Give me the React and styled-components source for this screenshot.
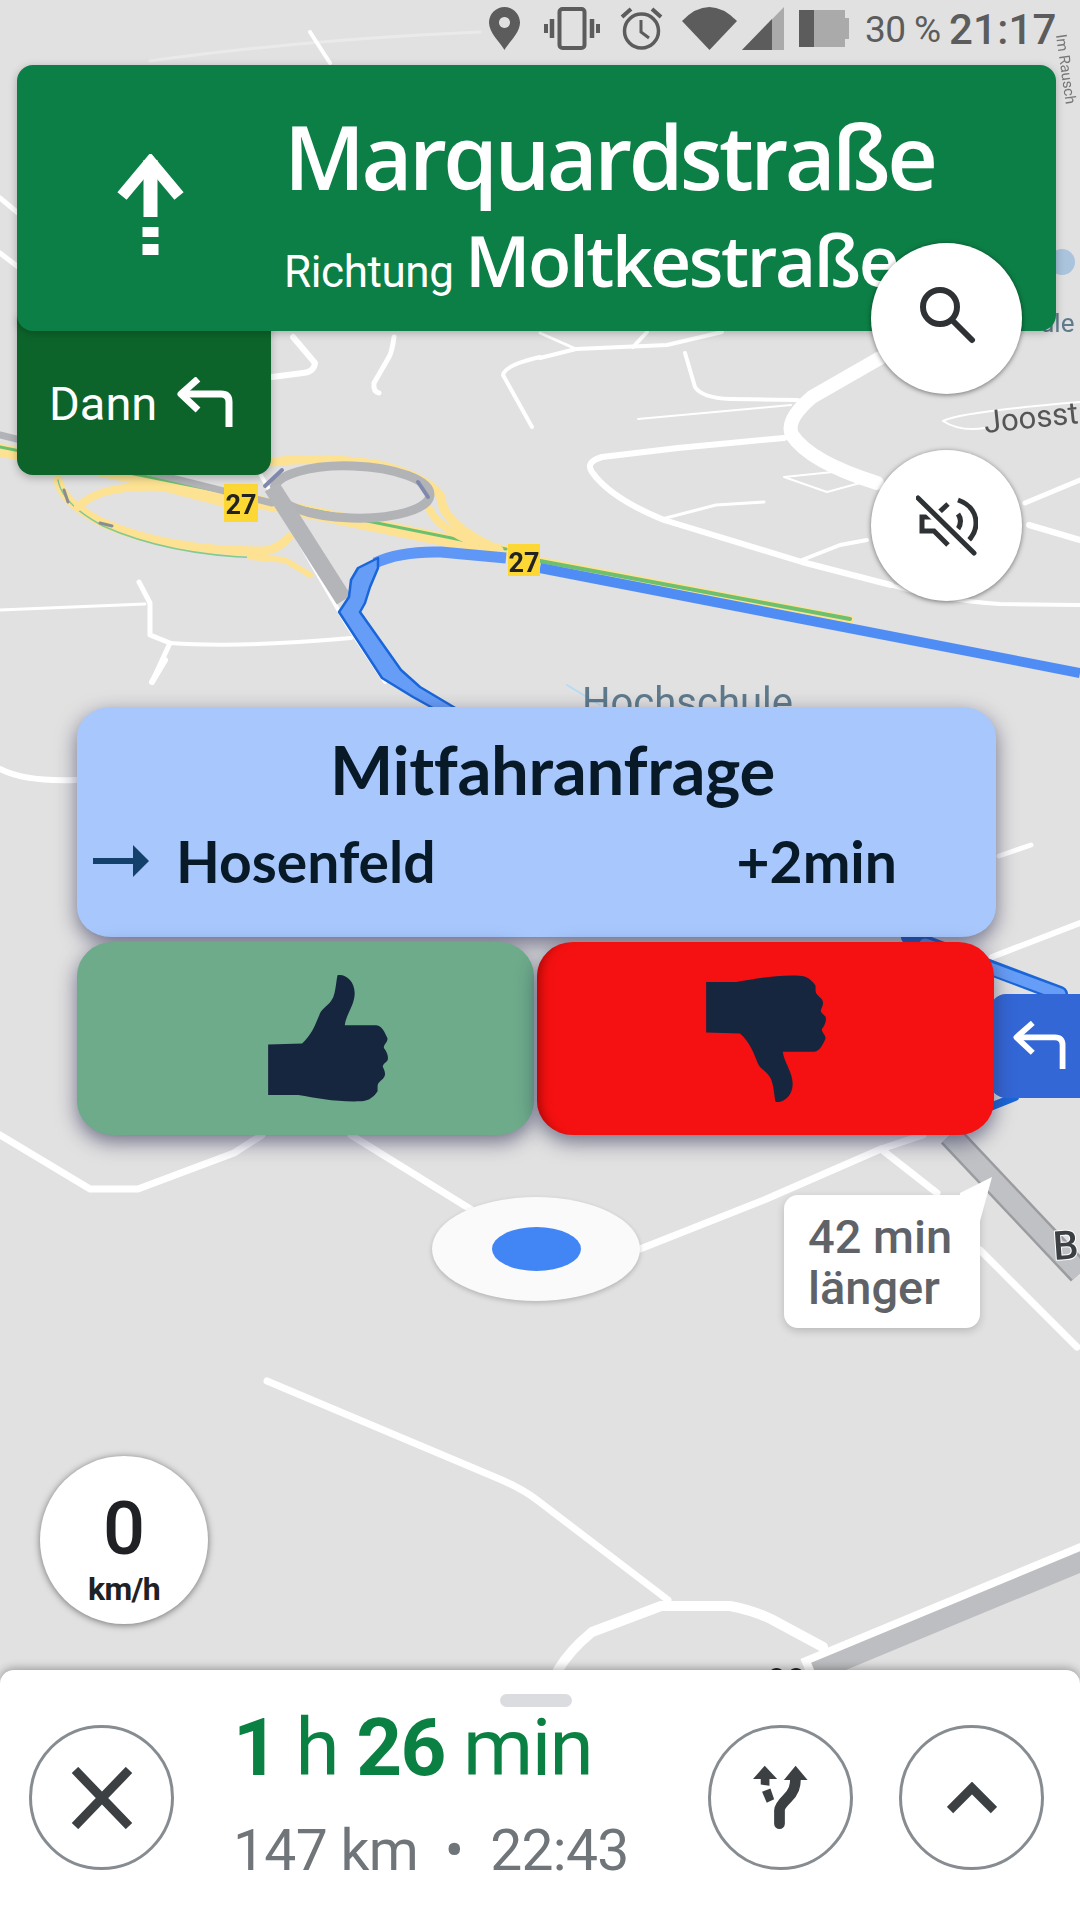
import React from 'react';
import styled, { createGlobalStyle } from 'styled-components';

const Global = createGlobalStyle`
  html, body { margin: 0; padding: 0; background: #e1e1e1; }
  #root { width: 1080px; height: 1920px; }
`;

const Stage = styled.div`
  position: relative;
  width: 1080px;
  height: 1920px;
  overflow: hidden;
  background: #e1e1e1;
  font-family: Roboto, "Liberation Sans", sans-serif;
`;

const MapCanvas = styled.svg`
  position: absolute;
  inset: 0;
  filter: blur(0.7px);
`;

const Foreground = styled.div`
  position: relative;
  z-index: 2;
  height: 1920px;
  display: flex;
  flex-direction: column;
`;

const StatusBar = styled.div`
  height: 65px;
  flex: none;
  padding-right: 26px;
  display: flex;
  align-items: center;
  justify-content: flex-end;
  color: #5c5c5c;
  box-sizing: border-box;
`;

const StatusIcon = styled.svg`
  display: block;
  flex: none;
  margin-right: ${p => p.$gap || 0}px;
  margin-left: ${p => p.$lead || 0}px;
  margin-top: -8px;
`;

const Battery = styled.span`
  font-size: 37px;
  width: 74px;
  margin-left: 16px;
  margin-top: -6px;
  letter-spacing: -0.6px;
  white-space: nowrap;
`;

const Clock = styled.span`
  font-size: 42px;
  font-weight: 500;
  width: 105px;
  margin-left: 10px;
  margin-top: -6px;
  letter-spacing: 0.2px;
  white-space: nowrap;
`;

const Banner = styled.div`
  position: relative;
  z-index: 1;
  flex: none;
  width: 1039px;
  height: 266px;
  margin-left: 17px;
  box-sizing: border-box;
  border-radius: 16px;
  background: #0c7f46;
  box-shadow: 0 2px 8px rgba(0, 0, 0, 0.25);
  display: flex;
  color: #fff;
`;

const BannerArrow = styled.div`
  width: 267px;
  flex: none;
  padding: 89px 0 0 100px;
  box-sizing: border-box;
`;

const BannerText = styled.div`
  display: flex;
  flex-direction: column;
  padding-top: 35px;
`;

const Street = styled.div`
  font-family: "Open Sans", Roboto, sans-serif;
  font-size: 88px;
  font-weight: 600;
  line-height: 112px;
  letter-spacing: -3.6px;
  white-space: nowrap;
`;

const Towards = styled.div`
  display: flex;
  align-items: baseline;
  margin-top: -1px;
  white-space: nowrap;
`;

const TowardsLabel = styled.span`
  font-size: 44px;
  width: 181px;
  letter-spacing: -0.4px;
`;

const TowardsStreet = styled.span`
  font-family: "Open Sans", Roboto, sans-serif;
  font-size: 71px;
  font-weight: 600;
  letter-spacing: -2.4px;
`;

const NextTurn = styled.div`
  flex: none;
  width: 254px;
  height: 160px;
  margin: -16px 0 0 17px;
  padding: 16px 0 0 32px;
  box-sizing: border-box;
  border-radius: 0 0 16px 16px;
  background: #0d642b;
  box-shadow: 0 3px 8px rgba(0, 0, 0, 0.25);
  color: #fff;
  display: flex;
  align-items: center;
  gap: 20px;
  font-size: 47px;
`;

const FloatingColumn = styled.div`
  position: absolute;
  top: 243px;
  left: 871px;
  z-index: 3;
  display: flex;
  flex-direction: column;
  gap: 56px;
`;

const RoundButton = styled.div`
  width: 151px;
  height: 151px;
  border-radius: 50%;
  background: #fff;
  box-shadow: 0 1px 5px rgba(0, 0, 0, 0.5);
  display: flex;
  align-items: center;
  justify-content: center;
`;

const RequestPanel = styled.div`
  flex: none;
  width: 919px;
  height: 230px;
  margin: 232px 0 0 77px;
  box-sizing: border-box;
  border-radius: 34px / 30px;
  background: #a8c8fd;
  box-shadow: 0 7px 20px rgba(40, 40, 80, 0.6);
  color: #081a28;
  font-family: Lato, "Open Sans", sans-serif;
  font-weight: 700;
  display: flex;
  flex-direction: column;
`;

const RequestTitle = styled.div`
  font-size: 67px;
  line-height: 76px;
  padding: 24px 0 0 32px;
  text-align: center;
  letter-spacing: -0.3px;
`;

const RequestRow = styled.div`
  display: flex;
  align-items: center;
  font-size: 57px;
  line-height: 64px;
  font-weight: 700;
  padding: 22px 99px 0 16px;
`;

const Destination = styled.span`
  flex: 1;
  margin-left: 27px;
`;

const ActionRow = styled.div`
  flex: none;
  display: flex;
  gap: 3px;
  margin: 5px 0 0 77px;
`;

const ActionButton = styled.div`
  width: 457px;
  height: 193px;
  box-sizing: border-box;
  padding-left: ${p => p.$shift || 0}px;
  border-radius: 36px / 34px;
  background: ${p => p.$bg};
  box-shadow: ${p => p.$inner ? 'inset 14px 0 12px -12px rgba(110, 0, 0, 0.7),' : ''} 0 7px 20px rgba(40, 40, 80, 0.6);
  display: flex;
  align-items: center;
  justify-content: center;
`;

const Thumb = styled.svg`
  display: block;
  transform: ${p => p.$down ? 'scaleY(-1)' : 'none'};
`;

const SpeedBadge = styled.div`
  flex: none;
  width: 168px;
  height: 168px;
  margin: 321px 0 0 40px;
  border-radius: 50%;
  background: #fff;
  box-shadow: 0 1px 7px rgba(0, 0, 0, 0.5);
  color: #202124;
  display: flex;
  flex-direction: column;
  align-items: center;
`;

const SpeedValue = styled.div`
  font-size: 74px;
  font-weight: 500;
  line-height: 74px;
  margin-top: 36px;
`;

const SpeedUnit = styled.div`
  font-size: 32px;
  font-weight: 700;
  line-height: 34px;
  margin-top: 6px;
  letter-spacing: -0.6px;
`;

const Sheet = styled.div`
  position: relative;
  margin-top: auto;
  height: 250px;
  flex: none;
  box-sizing: border-box;
  border-radius: 14px 14px 0 0;
  background: #fff;
  box-shadow: 0 -2px 8px rgba(0, 0, 0, 0.3);
  display: flex;
  padding: 55px 36px 0 29px;
`;

const Handle = styled.div`
  position: absolute;
  top: 24px;
  left: 500px;
  width: 72px;
  height: 13px;
  border-radius: 7px;
  background: #dadce0;
`;

const OutlineButton = styled.div`
  flex: none;
  width: 145px;
  height: 145px;
  margin-left: ${p => p.$gap || 0}px;
  box-sizing: border-box;
  border: 3px solid #878c91;
  border-radius: 50%;
  display: flex;
  align-items: center;
  justify-content: center;
`;

const TripInfo = styled.div`
  width: 534px;
  flex: none;
  padding-left: 59px;
  box-sizing: border-box;
  display: flex;
  flex-direction: column;
`;

const Eta = styled.div`
  margin-top: -24px;
  font-size: 80px;
  line-height: 94px;
  color: #0b8043;
  white-space: nowrap;
  letter-spacing: -1.6px;
`;

const EtaStrong = styled.b`
  font-weight: 700;
`;

const TripMeta = styled.div`
  margin-top: 24px;
  font-size: 57px;
  line-height: 64px;
  color: #70757a;
  white-space: nowrap;
  letter-spacing: -0.7px;
`;

const TurnChip = styled.div`
  position: absolute;
  z-index: 1;
  left: 990px;
  top: 994px;
  width: 90px;
  height: 104px;
  box-sizing: border-box;
  padding: 27px 0 0 22px;
  border-radius: 16px 0 0 16px;
  background: #3367d6;
`;

const LocationHalo = styled.div`
  position: absolute;
  z-index: 1;
  left: 432px;
  top: 1197px;
  width: 208px;
  height: 104px;
  border-radius: 50%;
  background: #fafafa;
  box-shadow: 0 2px 5px rgba(0, 0, 0, 0.2);
  display: flex;
  align-items: center;
  justify-content: center;
`;

const LocationDot = styled.div`
  width: 89px;
  height: 44px;
  border-radius: 50%;
  background: #4285f4;
`;

const TimeBubble = styled.div`
  position: absolute;
  z-index: 1;
  left: 784px;
  top: 1195px;
  width: 196px;
  height: 133px;
  box-sizing: border-box;
  padding: 16px 0 0 24px;
  border-radius: 14px;
  background: #fff;
  box-shadow: 0 3px 8px rgba(0, 0, 0, 0.18);
  color: #5f6368;
  font-size: 47px;
  font-weight: 500;
  line-height: 51px;
`;

const BubbleTail = styled.svg`
  position: absolute;
  top: -20px;
  right: -18px;
`;

const white = [
  ['M293 337 L315 363 Q314 372 303 373 L272 377', 6],
  ['M394 337 Q392 352 389 357 L374 383 Q373 392 379 393', 5],
  ['M540 357 Q505 365 503 375 L532 427', 4],
  ['M0 610 L145 604', 3],
  ['M139 582 L150 603 L150 635 L170 643 L152 682', 5],
  ['M170 643 Q240 648 351 638', 4],
  ['M540 358 L576 349 L667 345 L722 332', 4],
  ['M540 333 L576 349', 3],
  ['M633 347 L647 332', 4],
  ['M685 353 L695 387 Q702 398 730 399 L798 400', 4],
  ['M638 419 L791 405', 2],
  ['M784 438 L678 448 L602 457 Q585 462 592 472 Q610 498 664 520 L802 562 L891 585', 6],
  ['M890 585 Q940 600 1000 604 L1080 605', 4],
  ['M784 477 L827 492 L860 483 M784 477 L833 472', 2],
  ['M662 519 L716 505 L764 502', 3],
  ['M802 560 L840 545 L867 540', 4],
  ['M1025 503 L1080 480', 5],
  ['M1029 525 L1080 540', 6],
  ['M1080 402 Q960 412 943 421 Q960 432 985 428', 2],
  ['M310 32 L330 63', 4],
  ['M0 198 L18 213', 5],
  ['M0 253 L22 270', 5],
  ['M165 660 L152 682', 6],
  ['M0 769 Q25 782 76 780', 6],
  ['M999 856 L1031 845', 5],
  ['M992 957 L1080 923', 6],
  ['M0 1135 L90 1189 L138 1189 L234 1153 L262 1135', 7],
  ['M351 1135 L496 1225', 7],
  ['M640 1249 L764 1200 L881 1149 L923 1135', 7],
  ['M881 1149 L937 1193', 7],
  ['M980 1250 L1077 1347', 7],
  ['M267 1381 L490 1475 Q520 1487 537 1500 L668 1600', 7],
  ['M558 1670 Q570 1650 592 1632 L661 1606 L730 1606 Q752 1610 771 1619 L823 1647', 10],
];

const MapArt = () => (
  <MapCanvas width="1080" height="1920" viewBox="0 0 1080 1920" fill="none" strokeLinecap="round" strokeLinejoin="round">
    <path d="M150 61 Q300 40 480 32" stroke="#eaeaea" strokeWidth="3" />
    {white.map(([d, w]) => <path key={d} d={d} stroke="#fff" strokeWidth={w} />)}
    <path d="M880 358 L812 397 Q785 420 792 435 Q810 462 877 483" stroke="#fff" strokeWidth="14" />

    <path d="M567 685 L600 705" stroke="#b5dcf5" strokeWidth="2" />
    <text x="582" y="716" fontFamily="Roboto, sans-serif" fontSize="40" fill="#5e7a8c">Hochschule</text>
    <text x="985" y="433" fontFamily="Roboto, sans-serif" fontSize="31" fill="#555" transform="rotate(-6 985 433)">Joosst</text>
    <text x="1040" y="332" fontFamily="Roboto, sans-serif" fontSize="26" fill="#5e7a8c">ule</text>
    <text x="1056" y="35" fontFamily="Roboto, sans-serif" fontSize="15" fill="#777" transform="rotate(82 1056 35)">Im Rausch</text>
    <circle cx="1062" cy="262" r="13" fill="#a9c4dc" />

    <path d="M0 450 L506 552" stroke="#fde293" strokeWidth="13" />
    <path d="M0 447 L506 549" stroke="#6cc070" strokeWidth="3" />
    <path d="M0 435 L272 503" stroke="#b1b3b7" strokeWidth="7" />
    <path d="M58 480 Q62 502 103 523 Q170 552 265 551 Q280 548 289 537" stroke="#fde293" strokeWidth="9" />
    <path d="M58 480 Q62 504 103 526 Q170 556 265 558" stroke="#81c995" strokeWidth="1.5" />
    <path d="M78 507 Q100 484 162 487 L224 503" stroke="#fde293" strokeWidth="8" />
    <path d="M250 557 L285 560 L310 575" stroke="#fde293" strokeWidth="6" />
    <path d="M272 462 Q320 456 380 465 Q430 478 441 497 Q442 525 499 550" stroke="#fde293" strokeWidth="9" />
    <path d="M430 510 Q438 528 475 543" stroke="#fde293" strokeWidth="8" />
    <ellipse cx="352" cy="492" rx="78" ry="26" stroke="#b1b3b7" strokeWidth="9" transform="rotate(2 352 492)" />
    <path d="M255 465 L347 625 L385 682" stroke="#fff" strokeWidth="4" />
    <path d="M272 487 L344 600" stroke="#b3b5b9" strokeWidth="17" strokeLinecap="butt" />
    <path d="M265 486 L282 470 M428 497 L418 482" stroke="#8089ad" strokeWidth="4" />
    <path d="M64 490 L68 502 M100 523 L112 526" stroke="#8a8d92" strokeWidth="3" />

    <path d="M506 558 L441 552 Q400 551 375 563" stroke="#5f97f6" strokeWidth="11" strokeLinecap="butt" />
    <path
      d="M378 558 L358 568 L351 580 L349 597 L339 612 L382 678 L413 697 L440 712 L462 712 L420 687 L401 670 L360 612 L365 603 L370 587 L378 568 Z"
      fill="#669df6"
      stroke="#1a66d9"
      strokeWidth="2.5"
    />
    <path d="M540 561 L850 620" stroke="#fde293" strokeWidth="8" />
    <path d="M540 561 L850 619" stroke="#6cc070" strokeWidth="4" />
    <path d="M540 568 L1080 673" stroke="#4f8df5" strokeWidth="10" strokeLinecap="butt" />

    <path d="M909 937 L1060 994" stroke="#1a66d9" strokeWidth="16" />
    <path d="M925 944 L1060 994" stroke="#669df6" strokeWidth="11" />
    <path d="M985 1109 L1015 1097" stroke="#1a66d9" strokeWidth="8" />

    <path d="M950 1135 L1080 1273" stroke="#9a9c9f" strokeWidth="25" strokeLinecap="butt" />
    <path d="M950 1135 L1080 1273" stroke="#bfc1c4" strokeWidth="20" strokeLinecap="butt" />
    <text x="1054" y="1260" fontFamily="Roboto, sans-serif" fontWeight="500" fontSize="40" fill="#3c4043" stroke="#fff" strokeWidth="2" paintOrder="stroke" transform="rotate(-4 1054 1260)">B</text>

    <path d="M1085 1554 L805 1670" stroke="#fff" strokeWidth="24" strokeLinecap="butt" />
    <path d="M1085 1560 L815 1672" stroke="#bcbec1" strokeWidth="20" strokeLinecap="butt" />
    <text x="767" y="1692" fontFamily="Roboto, sans-serif" fontWeight="700" fontSize="34" fill="#222">99</text>

    <rect x="224" y="484" width="34" height="38" fill="#fdd835" />
    <text x="241" y="514" textAnchor="middle" fontFamily="Roboto, sans-serif" fontWeight="700" fontSize="27" fill="#222">27</text>
    <rect x="508" y="544" width="32" height="32" fill="#fdd835" />
    <text x="524" y="572" textAnchor="middle" fontFamily="Roboto, sans-serif" fontWeight="700" fontSize="27" fill="#222">27</text>
  </MapCanvas>
);

const TurnLeft = ({ w = 56, h = 52, sw = 7 }) => (
  <svg width={w} height={h} viewBox="0 0 56 52" fill="none" stroke="#fff" strokeWidth={sw} strokeLinejoin="round">
    <path d="M21 2 L4 17 L21 33" />
    <path d="M4 17 H44 Q52 17 52 25 V50" />
  </svg>
);

const ThumbIcon = ({ down }) => (
  <Thumb $down={down} width="122" height="129" viewBox="68 72 320 388" preserveAspectRatio="none">
    <path fill="#17263f" d="M71 284 L160 281 C185 255 195 225 207 190 C215 170 238 165 245 130 C250 105 250 90 253 76 C270 70 298 90 298 130 C298 165 275 195 272 226 L355 226 C370 228 378 250 384 265 C385 278 372 285 375 295 C382 305 388 320 384 332 C378 340 370 345 372 352 C376 362 380 372 376 380 C372 392 358 395 358 410 L358 425 C350 440 335 455 315 455 C250 458 200 445 150 436 L71 436 Z" />
  </Thumb>
);

export default function App() {
  return (
    <Stage>
      <Global />
      <MapArt />
      <TurnChip><TurnLeft w={55} h={50} sw={6} /></TurnChip>
      <LocationHalo><LocationDot /></LocationHalo>
      <TimeBubble>
        42 min<br />länger
        <BubbleTail width="40" height="50" viewBox="0 0 40 50">
          <path d="M2 18 L34 2 L22 46 L2 46 Z" fill="#fff" />
        </BubbleTail>
      </TimeBubble>

      <Foreground>
        <StatusBar>
          <StatusIcon $gap={24} width="31" height="43" viewBox="0 0 31 43">
            <path fill="#5c5c5c" fillRule="evenodd" d="M15.5 0 C24 0 31 7 31 15.5 C31 26 20 35 15.5 43 C11 35 0 26 0 15.5 C0 7 7 0 15.5 0 Z M15.5 10 a5.5 5.5 0 1 0 0.01 0 Z" />
          </StatusIcon>
          <StatusIcon $gap={20} width="56" height="43" viewBox="0 0 56 43" fill="none" stroke="#5c5c5c">
            <rect x="15.5" y="2" width="25" height="39" rx="3" strokeWidth="4" />
            <path d="M8 12 V31 M48 12 V31" strokeWidth="4.5" />
            <path d="M2 17 V26 M54 17 V26" strokeWidth="4" />
          </StatusIcon>
          <StatusIcon $gap={19} width="43" height="43" viewBox="0 0 43 43" fill="none" stroke="#5c5c5c">
            <circle cx="21.5" cy="24" r="17" strokeWidth="3.5" />
            <path d="M21 13 V25 L29 31" strokeWidth="3" />
            <path d="M2 10 L11 2 M41 10 L32 2" strokeWidth="4" />
          </StatusIcon>
          <StatusIcon $gap={5} width="55" height="43" viewBox="0 0 55 43">
            <path fill="#5c5c5c" d="M0 14 Q27 -14 55 14 L27.5 43 Z" />
          </StatusIcon>
          <StatusIcon width="42" height="43" viewBox="0 0 42 43">
            <path fill="#aaa" d="M42 0 V43 H0 Z" />
            <path fill="#5c5c5c" d="M30 12 V43 H0 Z" />
          </StatusIcon>
          <StatusIcon $lead={15} width="50" height="37" viewBox="0 0 50 37">
            <path fill="#aaa" d="M15 0 H46 V8 H50 V29 H46 V37 H15 Z" />
            <rect width="15" height="37" fill="#5c5c5c" />
          </StatusIcon>
          <Battery>30 %</Battery>
          <Clock>21:17</Clock>
        </StatusBar>

        <Banner>
          <BannerArrow>
            <svg width="68" height="102" viewBox="0 0 68 102" fill="none" stroke="#fff">
              <path d="M33.5 6 V63" strokeWidth="14" />
              <path d="M5 42 L33.5 8 L62 42" strokeWidth="12" />
              <path d="M33.5 73 V83 M33.5 90 V101" strokeWidth="16" />
            </svg>
          </BannerArrow>
          <BannerText>
            <Street>Marquardstraße</Street>
            <Towards>
              <TowardsLabel>Richtung</TowardsLabel>
              <TowardsStreet>Moltkestraße</TowardsStreet>
            </Towards>
          </BannerText>
        </Banner>

        <NextTurn>
          Dann
          <TurnLeft />
        </NextTurn>

        <FloatingColumn>
          <RoundButton>
            <svg width="58" height="60" viewBox="0 0 58 60" fill="none" stroke="#2f3235" strokeWidth="6" style={{ marginTop: -8 }}>
              <circle cx="22" cy="22" r="17" />
              <path d="M34 35 L54 55" strokeLinecap="round" />
            </svg>
          </RoundButton>
          <RoundButton>
            <svg width="62" height="62" viewBox="0 0 62 62" fill="none" stroke="#2f3235" strokeWidth="5">
              <path d="M32 9 L18 22 H6 V36 H18 L32 50" />
              <path d="M42 5 C56 10 60 20 60 28 C60 38 54 46 44 52" />
              <path d="M42 19 Q47 26 42 34" />
              <path d="M2 3 L58 58" stroke="#fff" strokeWidth="12" />
              <path d="M2 3 L58 58" strokeLinecap="round" />
            </svg>
          </RoundButton>
        </FloatingColumn>

        <RequestPanel>
          <RequestTitle>Mitfahranfrage</RequestTitle>
          <RequestRow>
            <svg width="56" height="32" viewBox="0 0 56 32">
              <path fill="#13416b" d="M0 13 H40 V0 L56 16 L40 32 V19 H0 Z" />
            </svg>
            <Destination>Hosenfeld</Destination>
            <span>+2min</span>
          </RequestRow>
        </RequestPanel>

        <ActionRow>
          <ActionButton $bg="#6dab8a" $shift={44}><ThumbIcon /></ActionButton>
          <ActionButton $bg="#f51111" $inner><ThumbIcon down /></ActionButton>
        </ActionRow>

        <SpeedBadge>
          <SpeedValue>0</SpeedValue>
          <SpeedUnit>km/h</SpeedUnit>
        </SpeedBadge>

        <Sheet>
          <Handle />
          <OutlineButton>
            <svg width="62" height="62" viewBox="0 0 62 62" stroke="#3c4043" strokeWidth="9">
              <path d="M4 3 L58 59 M58 3 L4 59" />
            </svg>
          </OutlineButton>
          <TripInfo>
            <Eta><EtaStrong>1</EtaStrong> h <EtaStrong>26</EtaStrong> min</Eta>
            <TripMeta>147 km &nbsp;•&nbsp; 22:43</TripMeta>
          </TripInfo>
          <OutlineButton>
            <svg width="57" height="66" viewBox="160 170 170 197" fill="#3c4043">
              <path d="M242 345 V305 C242 295 250 285 265 270 C285 250 290 235 290 205" fill="none" stroke="#3c4043" strokeWidth="32" strokeLinecap="round" />
              <path d="M255 215 L290 172 L326 215 Z" />
              <path d="M163 212 L198 172 L235 212 L212 212 V232 L186 228 V212 Z" />
              <path d="M190 250 L215 240 L226 272 L204 283 Z" />
            </svg>
          </OutlineButton>
          <OutlineButton $gap={46}>
            <svg width="50" height="32" viewBox="0 0 50 32" fill="none" stroke="#3c4043" strokeWidth="9">
              <path d="M3 28 L25 6 L47 28" />
            </svg>
          </OutlineButton>
        </Sheet>
      </Foreground>
    </Stage>
  );
}
